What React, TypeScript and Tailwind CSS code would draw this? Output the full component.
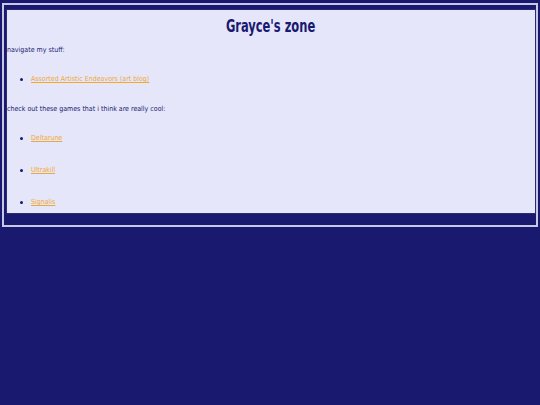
import React from "react";

const font = {
  fontFamily: '"Comic Sans MS", "DejaVu Sans Condensed", "Liberation Sans Narrow", "Liberation Sans", sans-serif',
};

function Item({ label, className }: { label: string; className: string }) {
  return (
    <li className={`flex items-center h-[10px] ${className}`}>
      <span className="ml-[13px] w-[3px] h-[3px] rounded-full bg-[#191970]" />
      <a href="#" className="ml-[8px] text-[7px] leading-[10px] text-[#f0a830] underline">
        {label}
      </a>
    </li>
  );
}

export default function App() {
  return (
    <div className="min-h-screen bg-[#191970] pt-[3px] px-[2px]" style={font}>
      <div className="border-2 border-[#c8c8e4] pl-[2px] pr-[0px] pt-[4px] pb-[11px]">
        <div className="border border-[#2a2a78] bg-[#e6e6fa] text-[#191970] pb-[6px]">
          <h1 className="mt-[6px] text-center text-[17px] leading-[20px] font-bold">
            <span className="inline-block scale-x-[0.75]">Grayce's zone</span>
          </h1>
          <p className="mt-[9px] text-[7px] leading-[10px]">navigate my stuff:</p>
          <ul className="mt-[19px]">
            <Item label="Assorted Artistic Endeavors (art blog)" className="" />
          </ul>
          <p className="mt-[20px] text-[7px] leading-[10px]">check out these games that i think are really cool:</p>
          <ul className="mt-[19px]">
            <Item label="Deltarune" className="" />
            <Item label="Ultrakill" className="mt-[22px]" />
            <Item label="Signalis" className="mt-[22px]" />
          </ul>
        </div>
      </div>
    </div>
  );
}
